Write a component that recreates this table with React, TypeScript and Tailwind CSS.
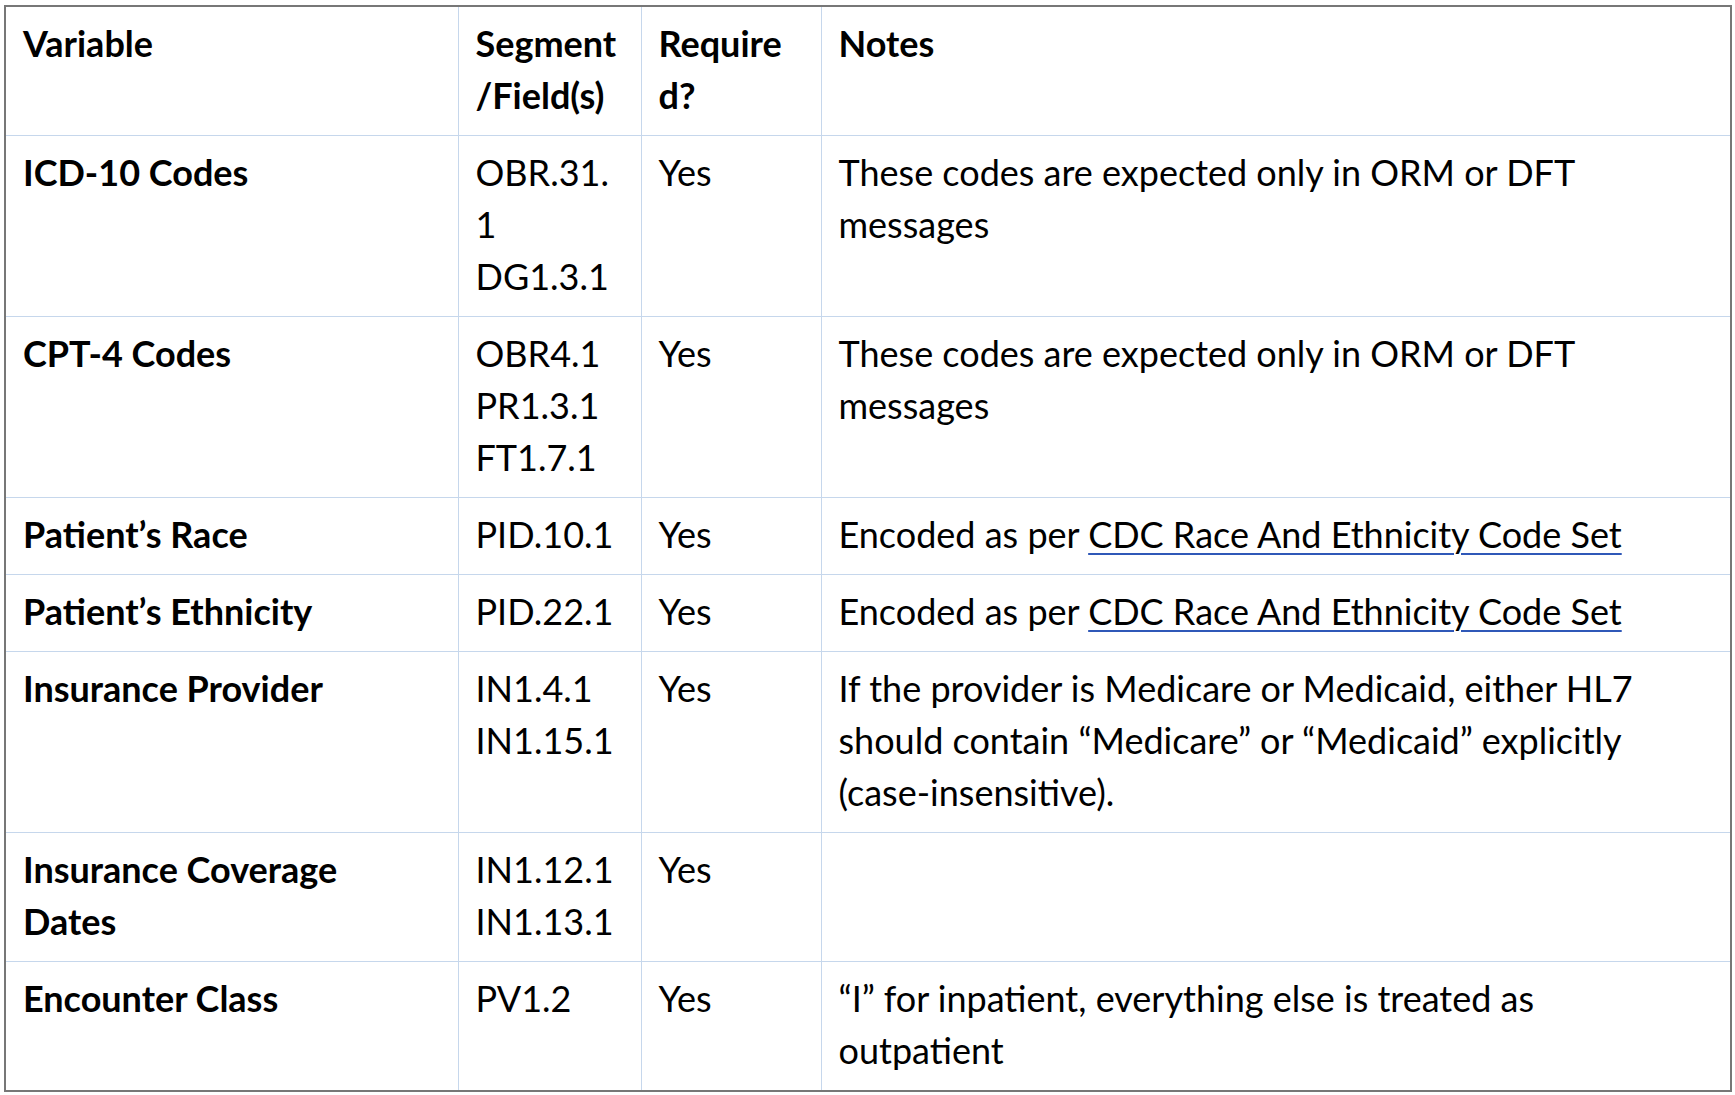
type Row = {
  variable: string[];
  fields: string[];
  required: string;
  notes: React.ReactNode[];
};

function CodeSetLink() {
  return (
    <>
      Encoded as per{" "}
      <a
        href="#"
        className="text-black underline decoration-[#2f58b8] decoration-2 underline-offset-[5px]"
      >
        CDC Race And Ethnicity Code Set
      </a>
    </>
  );
}

const rows: Row[] = [
  {
    variable: ["ICD-10 Codes"],
    fields: ["OBR.31.", "1", "DG1.3.1"],
    required: "Yes",
    notes: ["These codes are expected only in ORM or DFT", "messages"],
  },
  {
    variable: ["CPT-4 Codes"],
    fields: ["OBR4.1", "PR1.3.1", "FT1.7.1"],
    required: "Yes",
    notes: ["These codes are expected only in ORM or DFT", "messages"],
  },
  {
    variable: ["Patient’s Race"],
    fields: ["PID.10.1"],
    required: "Yes",
    notes: [<CodeSetLink key="l" />],
  },
  {
    variable: ["Patient’s Ethnicity"],
    fields: ["PID.22.1"],
    required: "Yes",
    notes: [<CodeSetLink key="l" />],
  },
  {
    variable: ["Insurance Provider"],
    fields: ["IN1.4.1", "IN1.15.1"],
    required: "Yes",
    notes: [
      "If the provider is Medicare or Medicaid, either HL7",
      "should contain “Medicare” or “Medicaid” explicitly",
      "(case-insensitive).",
    ],
  },
  {
    variable: ["Insurance Coverage", "Dates"],
    fields: ["IN1.12.1", "IN1.13.1"],
    required: "Yes",
    notes: [],
  },
  {
    variable: ["Encounter Class"],
    fields: ["PV1.2"],
    required: "Yes",
    notes: ["“I” for inpatient, everything else is treated as", "outpatient"],
  },
];

function Lines({ items }: { items: React.ReactNode[] }) {
  return (
    <>
      {items.map((item, i) => (
        <div key={i} className="whitespace-nowrap">
          {item}
        </div>
      ))}
    </>
  );
}

const cell = "border border-[#c6d7ec] align-top pl-[17px] pr-1 pt-[10px] pb-[14px]";

export default function App() {
  return (
    <div
      className="min-h-screen bg-white pl-[4px] pt-[5px] text-black"
      style={{ fontFamily: "Lato, 'Open Sans', sans-serif" }}
    >
      <table className="w-[1728px] table-fixed border-collapse border-2 border-[#777777] text-[36px] leading-[52px]">
        <colgroup>
          <col className="w-[453px]" />
          <col className="w-[183px]" />
          <col className="w-[180px]" />
          <col />
        </colgroup>
        <thead>
          <tr className="font-bold">
            <th className={cell + " text-left"}>Variable</th>
            <th className={cell + " text-left"}>
              <Lines items={["Segment", "/Field(s)"]} />
            </th>
            <th className={cell + " text-left"}>
              <Lines items={["Require", "d?"]} />
            </th>
            <th className={cell + " text-left"}>Notes</th>
          </tr>
        </thead>
        <tbody>
          {rows.map((row, i) => (
            <tr key={i}>
              <td className={cell + " font-bold"}>
                <Lines items={row.variable} />
              </td>
              <td className={cell}>
                <Lines items={row.fields} />
              </td>
              <td className={cell}>{row.required}</td>
              <td className={cell}>
                <Lines items={row.notes} />
              </td>
            </tr>
          ))}
        </tbody>
      </table>
    </div>
  );
}
